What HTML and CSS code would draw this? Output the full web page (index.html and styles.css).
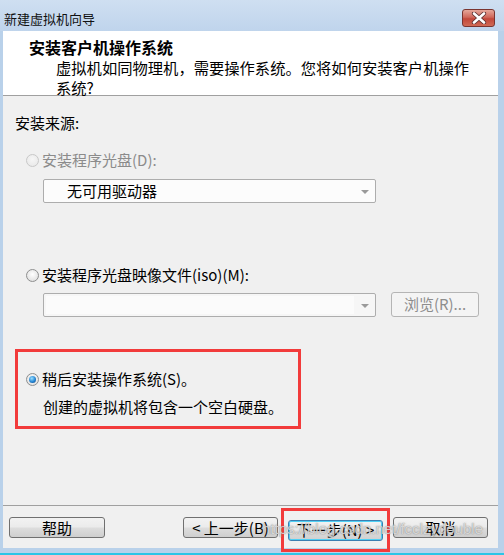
FILE: index.html
```html
<!DOCTYPE html>
<html lang="zh-CN">
<head>
  <meta charset="UTF-8">
  <title>新建虚拟机向导</title>
  <link rel="stylesheet" href="styles.css">
</head>
<body>
  <div class="window">
    <!-- 标题栏 -->
    <div class="titlebar">
      <span class="title">新建虚拟机向导</span>
      <span class="close">
        <svg width="16" height="12" viewBox="0 0 16 12">
          <path d="M3 1.5 L13 10.5 M13 1.5 L3 10.5" stroke="#5a3030" stroke-width="4.2" stroke-linecap="round"/>
          <path d="M3 1.5 L13 10.5 M13 1.5 L3 10.5" stroke="#ffffff" stroke-width="2.6" stroke-linecap="round"/>
        </svg>
      </span>
    </div>

    <div class="client">
      <!-- 页头 -->
      <div class="header">
        <div class="header-title">安装客户机操作系统</div>
        <div class="header-sub">虚拟机如同物理机，需要操作系统。您将如何安装客户机操作<br>系统?</div>
      </div>

      <!-- 安装来源 -->
      <div class="content">
        <div class="section-label">安装来源:</div>

        <div class="option disabled"><span class="radio"></span>安装程序光盘(D):</div>
        <div class="combo">
          <span class="combo-text">无可用驱动器</span>
          <span class="arrow"></span>
        </div>

        <div class="option option-iso"><span class="radio"></span>安装程序光盘映像文件(iso)(M):</div>
        <div class="iso-row">
          <div class="combo combo-empty">
            <span class="combo-field"></span>
            <span class="arrow"></span>
          </div>
          <span class="browse">浏览(R)...</span>
        </div>

        <div class="later">
          <div class="option"><span class="radio checked"></span>稍后安装操作系统(S)。</div>
          <div class="note">创建的虚拟机将包含一个空白硬盘。</div>
        </div>
      </div>

      <!-- 按钮 -->
      <div class="footer">
        <button class="btn btn-help">帮助</button>
        <button class="btn">&lt; 上一步(B)</button>
        <span class="mark"><button class="btn btn-default">下一步(N) &gt;</button></span>
        <button class="btn">取消</button>
      </div>
    </div>

    <div class="watermark">https://blog.csdn.net/fcclzydouble</div>
  </div>
</body>
</html>
```

FILE: styles.css
```css
* { box-sizing: border-box; }
body {
  margin: 0;
  font-family: "Noto Sans CJK SC", "Noto Sans", sans-serif;
  color: #000;
}
.window {
  position: relative;
  width: 504px;
  height: 555px;
  display: flex;
  flex-direction: column;
  background: #b9d1ea;
  border-bottom: 2px solid #2cc5e6;
}

/* 标题栏 */
.titlebar {
  height: 31px;
  flex: none;
  display: flex;
  align-items: flex-start;
  justify-content: space-between;
  padding-left: 4px;
  background: linear-gradient(#cfdff1, #bfd4ec);
}
.title {
  margin-top: 11px;
  font-size: 13px;
  line-height: 16px;
  color: #111;
}
.close {
  margin: 9px 9px 0 0;
  width: 33px;
  height: 18px;
  display: flex;
  align-items: center;
  justify-content: center;
  border: 1px solid #7a3530;
  border-radius: 3px;
  background: linear-gradient(#e6a79a, #d0685b 45%, #c2473a 55%, #d06a55);
}

/* 窗口内容区 */
.client {
  flex: 1;
  margin: 0 6px 5px 3px;
  background: #f0f0f0;
  display: flex;
  flex-direction: column;
}
.header {
  height: 65px;
  flex: none;
  background: #fff;
  border-bottom: 1px solid #a0a0a0;
  padding: 7px 0 0 26px;
}
.header-title {
  font-size: 16px;
  font-weight: 700;
  line-height: 18px;
}
.header-sub {
  margin-top: 1px;
  padding-left: 27px;
  font-size: 15.3px;
  line-height: 20px;
  white-space: nowrap;
}

.content {
  flex: 1;
  padding: 17px 12px 0 12px;
  font-size: 15px;
  line-height: 20px;
}
.section-label { height: 20px; }

.option {
  display: flex;
  align-items: center;
  height: 20px;
  margin-top: 17px;
  padding-left: 11px;
}
.option-iso { margin-top: 62px; }
.option.disabled { color: #8b8b8b; }

.radio {
  width: 13px;
  height: 13px;
  margin-right: 3px;
  border-radius: 50%;
  border: 1px solid #8e8f8f;
  background: radial-gradient(circle at 50% 40%, #ffffff, #e4e4e4 70%, #d2d2d2);
  position: relative;
}
.disabled .radio {
  border-color: #c8c8c8;
  background: radial-gradient(circle at 50% 40%, #f6f6f6, #e6e6e6);
}
.radio.checked::after {
  content: "";
  position: absolute;
  left: 2px;
  top: 2px;
  width: 7px;
  height: 7px;
  border-radius: 50%;
  background: radial-gradient(circle at 40% 35%, #9be0ff, #2485d4 55%, #0b3c74);
}

.combo {
  position: relative;
  margin: 9px 0 0 28px;
  width: 333px;
  height: 24px;
  border: 1px solid #adadad;
  border-radius: 2px;
  background: #fcfcfc;
  display: flex;
  align-items: center;
}
.combo-text {
  padding-left: 23px;
}
.arrow {
  position: absolute;
  right: 6px;
  top: 10px;
  border-left: 4px solid transparent;
  border-right: 4px solid transparent;
  border-top: 4px solid #9a9a9a;
}
.iso-row {
  display: flex;
  align-items: flex-start;
  margin-top: 7px;
}
.combo-empty {
  margin-top: 1px;
  background: #f6f6f6;
}
.combo-field {
  margin-left: 2px;
  width: 308px;
  height: 18px;
  background: #fbfbfb;
}
.browse {
  margin-left: 15px;
  width: 88px;
  height: 25px;
  border: 1px solid #b5b5b5;
  border-radius: 3px;
  background: #f4f4f4;
  color: #8d8d8d;
  text-align: center;
  line-height: 22px;
}

/* 红框标注 */
.later {
  margin-top: 32px;
  width: 286px;
  border: 3px solid #f23b3b;
  padding: 0 0 9px 0;
}
.later .option {
  margin-top: 17px;
  padding-left: 8px;
}
.note {
  margin-top: 8px;
  padding-left: 25px;
  height: 20px;
}

/* 底部按钮 */
.footer {
  height: 43px;
  flex: none;
  border-top: 1px solid #a0a0a0;
  padding: 11px 10px 0 6px;
  display: flex;
  align-items: flex-start;
}
.btn {
  width: 95px;
  height: 21px;
  padding: 0;
  font-family: inherit;
  font-size: 15px;
  line-height: 18px;
  color: #000;
  border: 1px solid #707070;
  border-radius: 3px;
  background: linear-gradient(#f2f2f2, #ebebeb 48%, #dddddd 52%, #cfcfcf);
}
.btn + .btn { margin-left: 10px; }
.btn-help {
  width: 96px;
  margin-right: auto;
}
.btn-default {
  border-color: #3c7fb1;
  box-shadow: inset 0 0 0 1px #4fd0f5;
}
.mark {
  margin: -9px 3px 0 3px;
  border: 3px solid #f23b3b;
  padding: 6px 4px 8px 4px;
}

.watermark {
  position: absolute;
  left: 262px;
  top: 519px;
  font-family: "Liberation Sans", sans-serif;
  font-size: 15px;
  line-height: 20px;
  color: rgba(240, 240, 240, 0.75);
  text-shadow: 0 0 1px rgba(80, 80, 80, 0.6), 0 0 2px rgba(120, 120, 120, 0.35);
  pointer-events: none;
}
```
